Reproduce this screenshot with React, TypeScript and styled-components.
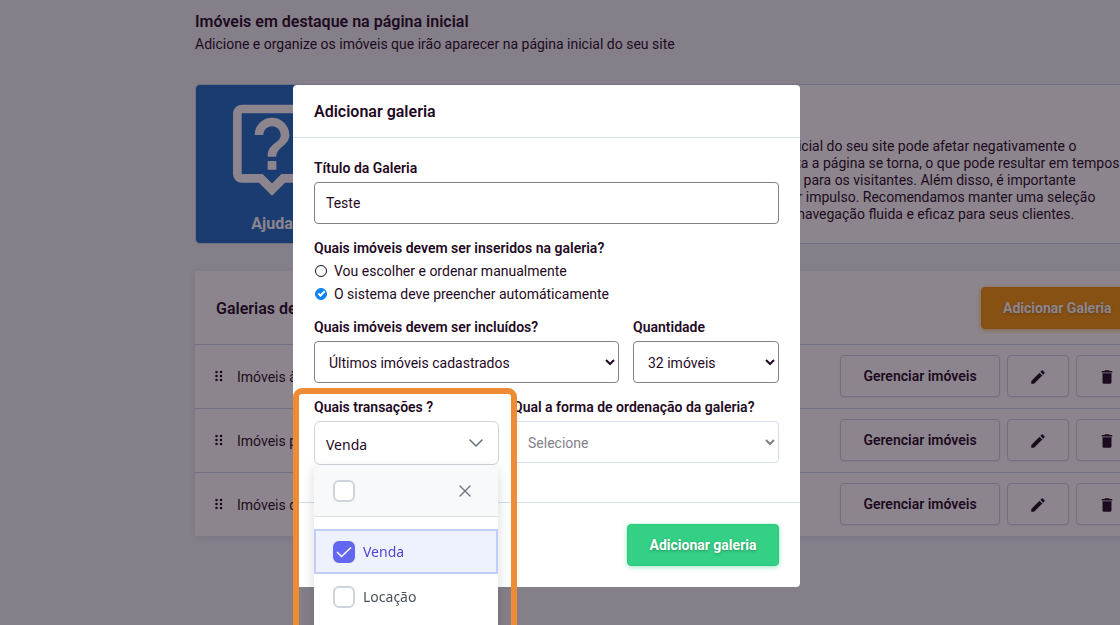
import React, { useId } from "react";
import styled, { createGlobalStyle, css } from "styled-components";
import { MdDelete, MdEdit, MdOutlineLiveHelp } from "react-icons/md";

const INK = "#1f0a24";
const LINE = "#d3deea";
const UI_FONT = 'Roboto, "Liberation Sans", sans-serif';
const WIDGET_FONT = '"Noto Sans", "Open Sans", sans-serif';

const GlobalStyle = createGlobalStyle`
  *, *::before, *::after { box-sizing: border-box; }
  html, body { margin: 0; overflow: hidden; }
  body {
    background: #f1f3f9;
    color: ${INK};
    font-family: ${UI_FONT};
    font-size: 14px;
    line-height: 18px;
  }
  button, input, select { font: inherit; color: inherit; }
  h1, h2, p, ul, fieldset, legend { margin: 0; padding: 0; border: 0; }
`;

const Page = styled.main`
  min-height: 100vh;
  padding: 12px 0 88px 195px;
`;

const Content = styled.div`
  display: flex;
  flex-direction: column;
  min-width: 964px;
`;

const PageTitle = styled.h1`
  font-size: 16px;
  font-weight: 600;
  line-height: 20px;
`;

const PageSubtitle = styled.p`
  margin-top: 2px;
  line-height: 20px;
`;

const HelpCard = styled.section`
  display: flex;
  height: 160px;
  margin-top: 30px;
  background: #fff;
  border: 1px solid #c9d2e6;
  border-radius: 5px;
  overflow: hidden;
`;

const HelpBadge = styled.div`
  flex: 0 0 152px;
  display: flex;
  flex-direction: column;
  align-items: center;
  gap: 15px;
  padding-top: 11px;
  background: #1a6cc6;
  color: #fff;
  font-size: 16px;
  font-weight: 700;
`;

const HelpText = styled.div`
  flex: 1;
  align-self: center;
  padding-left: 66px;
  line-height: 17px;
  white-space: nowrap;
`;

const HelpTitle = styled.h2`
  padding-bottom: 16px;
  font-size: 16px;
  line-height: 17px;
`;

const GalleryCard = styled.section`
  margin-top: 27px;
  background: #fff;
  box-shadow: 0 2px 8px rgba(60, 60, 120, 0.12);
`;

const GalleryHeader = styled.header`
  display: flex;
  align-items: center;
  justify-content: space-between;
  height: 73px;
  padding: 0 21px;
`;

const GalleryTitle = styled.h2`
  padding-top: 2px;
  font-size: 16px;
  font-weight: 600;
`;

const GalleryList = styled.ul`
  list-style: none;
`;

const GalleryRow = styled.li`
  display: flex;
  align-items: center;
  gap: 7px;
  height: 64px;
  padding: 0 21px 1px 19px;
  border-top: 1px solid #c9d2e6;
`;

const GalleryName = styled.span`
  flex: 1;
  padding: 1px 0 0 6px;
`;

const baseButton = css`
  display: inline-flex;
  align-items: center;
  justify-content: center;
  height: 42px;
  padding: 0 21px;
  border-radius: 4px;
  cursor: pointer;
`;

const OutlineButton = styled.button<{ $wide?: boolean }>`
  ${baseButton}
  min-width: ${(p) => (p.$wide ? "160px" : "62px")};
  background: #fff;
  border: 1px solid #cdd3e8;
  box-shadow: 0 1px 2px rgba(90, 100, 160, 0.12);
  font-weight: 600;

  svg { margin-top: 2px; }
`;

const SolidButton = styled.button<{ $tone: "orange" | "green" }>`
  ${baseButton}
  min-width: 152px;
  border: 1px solid ${(p) => (p.$tone === "orange" ? "#f08c0c" : "#2fc77d")};
  background: ${(p) => (p.$tone === "orange" ? "#f5960c" : "#33d085")};
  box-shadow: 0 1px 5px ${(p) => (p.$tone === "orange" ? "rgba(245, 150, 12, 0.6)" : "rgba(51, 208, 133, 0.5)")};
  color: #fff;
  font-weight: 700;
  text-shadow: 0 1px 3px rgba(0, 0, 0, 0.3);
`;

const AddGalleryButton = styled(SolidButton)`
  min-width: 157px;
  justify-content: flex-start;
`;

const Backdrop = styled.div`
  position: fixed;
  inset: 0;
  display: flex;
  align-items: flex-start;
  justify-content: center;
  padding: 85px 27px 0 0;
  background: rgba(26, 11, 28, 0.5);
  overflow: hidden;
`;

const Modal = styled.form`
  width: 100%;
  max-width: 507px;
  background: #fff;
  border-radius: 4px;
`;

const ModalHeader = styled.header`
  padding: 18px 21px 16px;
  border-bottom: 1px solid ${LINE};
`;

const ModalTitle = styled.h2`
  font-size: 16px;
  font-weight: 600;
`;

const ModalBody = styled.div`
  display: flex;
  flex-direction: column;
  gap: 15px;
  padding: 21px 21px 37px;
`;

const ModalFooter = styled.footer`
  display: flex;
  justify-content: flex-end;
  padding: 21px;
  border-top: 1px solid ${LINE};
`;

const FieldRow = styled.div<{ $columns: string }>`
  display: grid;
  grid-template-columns: ${(p) => p.$columns};
  align-items: start;
  gap: 14px;
`;

const Field = styled.div`
  position: relative;
  display: flex;
  flex-direction: column;
  gap: 5px;
`;

const Label = styled.label`
  font-weight: 600;
  white-space: nowrap;
`;

const TextInput = styled.input`
  width: 100%;
  height: 42px;
  padding: 0 11px;
  border: 1px solid #857f88;
  border-radius: 4px;
  background: #fff;
`;

const Select = styled.select`
  width: 100%;
  height: 42px;
  padding: 1px 0 0 10px;
  border: 1px solid #857f88;
  border-radius: 4px;
  background: #fff;

  &:disabled {
    border-color: #d3deee;
    color: #857f88;
    opacity: 1;
  }
`;

const RadioGroup = styled.fieldset`
  display: flex;
  flex-direction: column;
  margin-bottom: -3px;
`;

const RadioLegend = styled.legend`
  padding-bottom: 3px;
  font-weight: 600;
`;

const RadioLabel = styled.label`
  display: flex;
  align-items: center;
  gap: 7px;
  padding-left: 1px;
  line-height: 23px;
`;

const RadioInput = styled.input`
  appearance: none;
  display: grid;
  place-items: center;
  width: 12px;
  height: 12px;
  margin: 0 0 1px;
  border: 1px solid ${INK};
  border-radius: 50%;
  background: #fff;

  &:checked {
    border-color: #0a84f5;
    background: #0a84f5;
  }

  &:checked::after {
    content: "";
    width: 7px;
    height: 4px;
    margin-top: -2px;
    border: solid #fff;
    border-width: 0 0 2px 2px;
    transform: rotate(-45deg);
  }
`;

const Picker = styled.button`
  display: flex;
  align-items: center;
  justify-content: space-between;
  height: 44px;
  padding: 3px 15px 0 11px;
  border: 1px solid #ced4da;
  border-radius: 6px;
  background: #fff;
  font-family: ${WIDGET_FONT};

  svg { margin-top: -3px; }
`;

const PickerPanel = styled.div`
  position: absolute;
  top: 100%;
  left: 0;
  right: 1px;
  height: 200px;
  background: #fff;
  box-shadow: 0 4px 12px rgba(0, 0, 0, 0.15);
  color: #495057;
  font-family: ${WIDGET_FONT};
`;

const PickerHeader = styled.div`
  display: flex;
  align-items: center;
  justify-content: space-between;
  height: 52px;
  padding: 0 25px 0 19px;
  border-bottom: 1px solid #dee2e6;
  background: #f8f9fa;
`;

const CloseButton = styled.button`
  display: grid;
  place-items: center;
  width: 16px;
  height: 16px;
  padding: 0;
  border: 0;
  background: none;
`;

const PickerOptions = styled.div`
  padding-top: 12px;
`;

const PickerOption = styled.label<{ $selected?: boolean }>`
  display: flex;
  align-items: center;
  gap: 8px;
  height: 45px;
  padding: 0 17px;
  border: 2px solid transparent;
  ${(p) =>
    p.$selected &&
    css`
      border-color: #c3cdfd;
      background: #eef2ff;
      color: #5145cd;
    `}
`;

const BoxWrap = styled.span`
  display: grid;
  width: 22px;
  height: 22px;

  > * { grid-area: 1 / 1; }
  svg { place-self: center; pointer-events: none; }
`;

const BoxInput = styled.input`
  appearance: none;
  width: 22px;
  height: 22px;
  margin: 0;
  border: 2px solid #ced4da;
  border-radius: 6px;
  background: #fff;

  &:checked {
    border-color: #6366f1;
    background: #6366f1;
  }
`;

const Highlight = styled.div`
  position: absolute;
  z-index: 1;
  top: -10px;
  right: -18px;
  left: -21px;
  height: 300px;
  border: 6px solid #ee8b34;
  border-radius: 9px;
  pointer-events: none;
`;

function Grip() {
  return (
    <svg width="10" height="12" viewBox="0 0 10 12" fill={INK} aria-hidden="true">
      {[2, 6, 10].map((y) => (
        <g key={y}>
          <circle cx="2.500" cy={y} r="1.300" />
          <circle cx="7" cy={y} r="1.300" />
        </g>
      ))}
    </svg>
  );
}

function CheckBox({ checked, label }: { checked?: boolean; label?: string }) {
  return (
    <BoxWrap>
      <BoxInput type="checkbox" defaultChecked={checked} aria-label={label} />
      {checked && (
        <svg width="16" height="12" viewBox="0 0 16 12" fill="none" stroke="#fff" strokeWidth="1.6" aria-hidden="true">
          <path d="M1 6 5.500 10.500 15 1.500" />
        </svg>
      )}
    </BoxWrap>
  );
}

const galleries = ["Imóveis à venda", "Imóveis para locação", "Imóveis de temporada"];

const helpLines = [
  "Ter uma grande quantidade de galerias e imóveis na página inicial do seu site pode afetar negativamente o",
  "carregamento do site. Quanto mais imóveis listados, mais lenta a página se torna, o que pode resultar em tempos",
  "de carregamento mais lentos ou em uma experiência negativa para os visitantes. Além disso, é importante",
  "escolher com atenção os imóveis listados e evite incluí-los por impulso. Recomendamos manter uma seleção",
  "enxuta e relevante de imóveis em destaques, garantindo uma navegação fluida e eficaz para seus clientes.",
];

export default function App() {
  const id = useId();
  return (
    <>
      <GlobalStyle />
      <Page>
        <Content>
          <PageTitle>Imóveis em destaque na página inicial</PageTitle>
          <PageSubtitle>Adicione e organize os imóveis que irão aparecer na página inicial do seu site</PageSubtitle>

          <HelpCard>
            <HelpBadge>
              <MdOutlineLiveHelp size={104} />
              Ajuda
            </HelpBadge>
            <HelpText>
              <HelpTitle>Atenção</HelpTitle>
              {helpLines.map((line) => (
                <p key={line}>{line}</p>
              ))}
            </HelpText>
          </HelpCard>

          <GalleryCard>
            <GalleryHeader>
              <GalleryTitle>Galerias de imóveis</GalleryTitle>
              <AddGalleryButton type="button" $tone="orange">Adicionar Galeria</AddGalleryButton>
            </GalleryHeader>
            <GalleryList>
              {galleries.map((name) => (
                <GalleryRow key={name}>
                  <Grip />
                  <GalleryName>{name}</GalleryName>
                  <OutlineButton type="button" $wide>Gerenciar imóveis</OutlineButton>
                  <OutlineButton type="button" aria-label="Editar"><MdEdit size={18} /></OutlineButton>
                  <OutlineButton type="button" aria-label="Excluir"><MdDelete size={18} /></OutlineButton>
                </GalleryRow>
              ))}
            </GalleryList>
          </GalleryCard>
        </Content>
      </Page>

      <Backdrop>
        <Modal role="dialog" aria-labelledby={`${id}-title`} onSubmit={(e) => e.preventDefault()}>
          <ModalHeader>
            <ModalTitle id={`${id}-title`}>Adicionar galeria</ModalTitle>
          </ModalHeader>
          <ModalBody>
            <Field>
              <Label htmlFor={`${id}-name`}>Título da Galeria</Label>
              <TextInput id={`${id}-name`} type="text" defaultValue="Teste" />
            </Field>

            <RadioGroup>
              <RadioLegend>Quais imóveis devem ser inseridos na galeria?</RadioLegend>
              <RadioLabel>
                <RadioInput type="radio" name="fill" />
                Vou escolher e ordenar manualmente
              </RadioLabel>
              <RadioLabel>
                <RadioInput type="radio" name="fill" defaultChecked />
                O sistema deve preencher automáticamente
              </RadioLabel>
            </RadioGroup>

            <FieldRow $columns="305fr 146fr">
              <Field>
                <Label htmlFor={`${id}-include`}>Quais imóveis devem ser incluídos?</Label>
                <Select id={`${id}-include`}>
                  <option>Últimos imóveis cadastrados</option>
                </Select>
              </Field>
              <Field>
                <Label htmlFor={`${id}-amount`}>Quantidade</Label>
                <Select id={`${id}-amount`}>
                  <option>32 imóveis</option>
                </Select>
              </Field>
            </FieldRow>

            <FieldRow $columns="185fr 266fr">
              <Field>
                <Label htmlFor={`${id}-deals`}>Quais transações ?</Label>
                <Picker id={`${id}-deals`} type="button" aria-expanded="true">
                  Venda
                  <svg width="14" height="8" viewBox="0 0 14 8" fill="none" stroke="#6c757d" strokeWidth="1.6" aria-hidden="true">
                    <path d="M1 1 7 7 13 1" strokeLinecap="round" strokeLinejoin="round" />
                  </svg>
                </Picker>
                <PickerPanel>
                  <PickerHeader>
                    <CheckBox label="Selecionar todas" />
                    <CloseButton type="button" aria-label="Fechar">
                      <svg width="12" height="12" viewBox="0 0 12 12" fill="none" stroke="#6c757d" strokeWidth="1.4" aria-hidden="true">
                        <path d="M1 1 11 11M11 1 1 11" strokeLinecap="round" />
                      </svg>
                    </CloseButton>
                  </PickerHeader>
                  <PickerOptions>
                    <PickerOption $selected>
                      <CheckBox checked />
                      Venda
                    </PickerOption>
                    <PickerOption>
                      <CheckBox />
                      Locação
                    </PickerOption>
                  </PickerOptions>
                </PickerPanel>
                <Highlight />
              </Field>
              <Field>
                <Label htmlFor={`${id}-order`}>Qual a forma de ordenação da galeria?</Label>
                <Select id={`${id}-order`} disabled>
                  <option>Selecione</option>
                </Select>
              </Field>
            </FieldRow>
          </ModalBody>
          <ModalFooter>
            <SolidButton type="submit" $tone="green">Adicionar galeria</SolidButton>
          </ModalFooter>
        </Modal>
      </Backdrop>
    </>
  );
}
